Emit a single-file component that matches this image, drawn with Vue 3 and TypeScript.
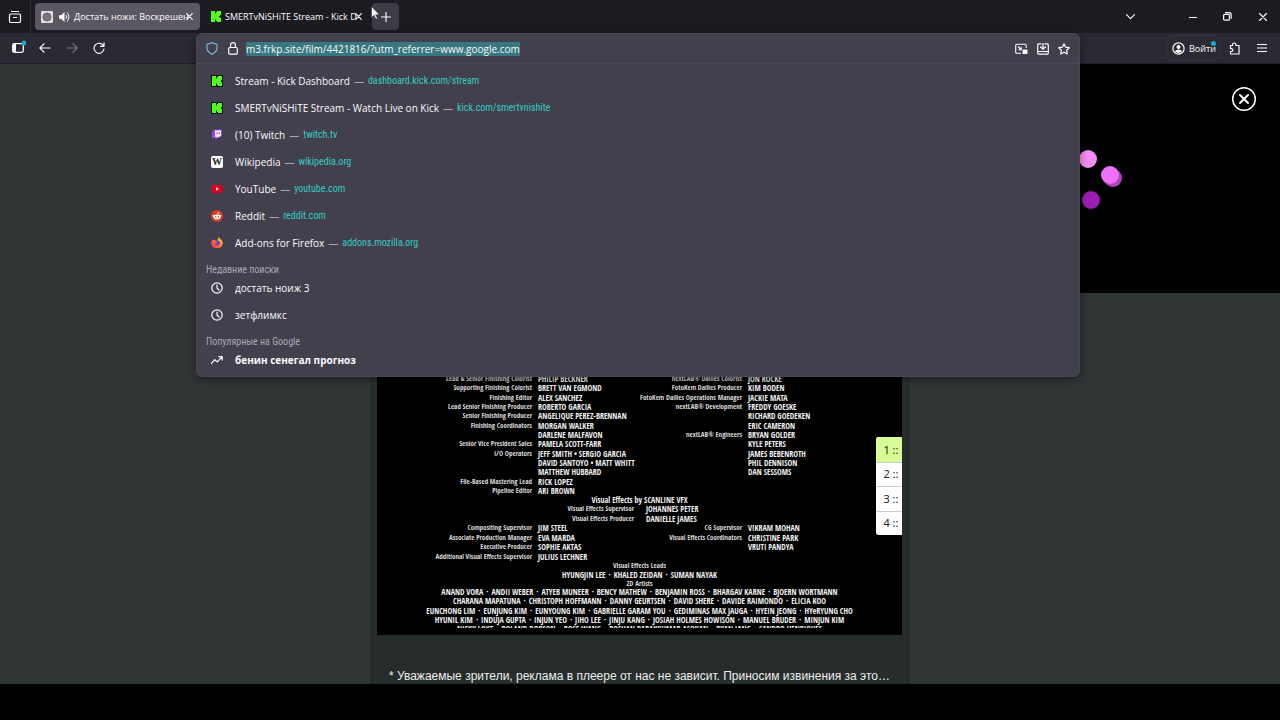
<script setup lang="ts">
import { onMounted, ref } from 'vue'

interface Site { icon: string; title: string; host: string }
interface Credit { role: string; name: string }

const address = ref('m3.frkp.site/film/4421816/?utm_referrer=www.google.com')
const addressField = ref<HTMLInputElement | null>(null)

const sites: Site[] = [
  { icon: 'kick', title: 'Stream - Kick Dashboard', host: 'dashboard.kick.com/stream' },
  { icon: 'kick', title: 'SMERTvNiSHiTE Stream - Watch Live on Kick', host: 'kick.com/smertvnishite' },
  { icon: 'twitch', title: '(10) Twitch', host: 'twitch.tv' },
  { icon: 'wiki', title: 'Wikipedia', host: 'wikipedia.org' },
  { icon: 'youtube', title: 'YouTube', host: 'youtube.com' },
  { icon: 'reddit', title: 'Reddit', host: 'reddit.com' },
  { icon: 'firefox', title: 'Add-ons for Firefox', host: 'addons.mozilla.org' },
]
const recent: string[] = ['достать ноиж 3', 'зетфлимкс']

const c = (role: string, name: string): Credit => ({ role, name })

const finishing: Credit[][] = [
  [
    c('Lead & Senior Finishing Colorist', 'PHILIP BECKNER'),
    c('Supporting Finishing Colorist', 'BRETT VAN EGMOND'),
    c('Finishing Editor', 'ALEX SANCHEZ'),
    c('Lead Senior Finishing Producer', 'ROBERTO GARCIA'),
    c('Senior Finishing Producer', 'ANGELIQUE PEREZ-BRENNAN'),
    c('Finishing Coordinators', 'MORGAN WALKER'),
    c('', 'DARLENE MALFAVON'),
    c('Senior Vice President Sales', 'PAMELA SCOTT-FARR'),
    c('I/O Operators', 'JEFF SMITH • SERGIO GARCIA'),
    c('', 'DAVID SANTOYO • MATT WHITT'),
    c('', 'MATTHEW HUBBARD'),
    c('File-Based Mastering Lead', 'RICK LOPEZ'),
    c('Pipeline Editor', 'ARI BROWN'),
  ],
  [
    c('nextLAB® Dailies Colorist', 'JON ROCKE'),
    c('FotoKem Dailies Producer', 'KIM BODEN'),
    c('FotoKem Dailies Operations Manager', 'JACKIE MATA'),
    c('nextLAB® Development', 'FREDDY GOESKE'),
    c('', 'RICHARD GOEDEKEN'),
    c('', 'ERIC CAMERON'),
    c('nextLAB® Engineers', 'BRYAN GOLDER'),
    c('', 'KYLE PETERS'),
    c('', 'JAMES BEBENROTH'),
    c('', 'PHIL DENNISON'),
    c('', 'DAN SESSOMS'),
    c('', ''),
    c('', ''),
  ],
]
const scanline: Credit[][] = [
  [
    c('Compositing Supervisor', 'JIM STEEL'),
    c('Associate Production Manager', 'EVA MARDA'),
    c('Executive Producer', 'SOPHIE AKTAS'),
    c('Additional Visual Effects Supervisor', 'JULIUS LECHNER'),
  ],
  [
    c('CG Supervisor', 'VIKRAM MOHAN'),
    c('Visual Effects Coordinators', 'CHRISTINE PARK'),
    c('', 'VRUTI PANDYA'),
    c('', ''),
  ],
]
const artists: string[][] = [
  ['ANAND VORA', 'ANDII WEBER', 'ATYEB MUNEER', 'BENCY MATHEW', 'BENJAMIN ROSS', 'BHARGAV KARNE', 'BJOERN WORTMANN'],
  ['CHARANA MAPATUNA', 'CHRISTOPH HOFFMANN', 'DANNY GEURTSEN', 'DAVID SHERE', 'DAVIDE RAIMONDO', 'ELICIA KOO'],
  ['EUNCHONG LIM', 'EUNJUNG KIM', 'EUNYOUNG KIM', 'GABRIELLE GARAM YOU', 'GEDIMINAS MAX JAUGA', 'HYEIN JEONG', 'HYeRYUNG CHO'],
  ['HYUNIL KIM', 'INDUJA GUPTA', 'INJUN YEO', 'JIHO LEE', 'JINJU KANG', 'JOSIAH HOLMES HOWISON', 'MANUEL BRUDER', 'MINJUN KIM'],
]
const lastArtists: string[] = ['NICKY LOKE', 'ROLAND DOBSON', 'ROSE WANG', 'ROSHAN PARAKKUMAR ASOKAN', 'RYAN JANG', 'SANDRO HENRIQUES']
const players: number[] = [1, 2, 3, 4]
const activePlayer = ref(1)

onMounted(() => {
  addressField.value?.focus()
  addressField.value?.select()
})
</script>

<template>
  <div class="browser">
    <header class="tabstrip">
      <button class="recent-view" aria-label="Недавние">
        <svg width="14" height="14" viewBox="0 0 14 14" class="line"><path d="M3.500 1.500h7M3 4h8a1.500 1.500 0 0 1 1.500 1.500V11a1.500 1.500 0 0 1-1.500 1.500H3A1.500 1.500 0 0 1 1.500 11V5.500A1.500 1.500 0 0 1 3 4zM5.500 7.500h3" /></svg>
      </button>
      <div class="tab active">
        <svg width="12" height="12" viewBox="0 0 12 12"><rect width="12" height="12" rx="1" fill="#e3d8da" /><circle cx="6" cy="6" r="4" fill="#77747b" stroke="#67636c" /></svg>
        <svg class="sound" width="11" height="12" viewBox="0 0 11 12"><path d="M0 4.200h2L5.500 1v10L2 7.800H0z" fill="#fbfbfe" /><path d="M7 4q1.600 2 0 4M8 1.500q4 4.500 0 9" fill="none" stroke="#fbfbfe" /></svg>
        <button class="tab-title">Достать ножи: Воскрешен</button>
        <button class="tab-close" aria-label="Закрыть вкладку"><svg width="7" height="7" viewBox="0 0 7 7" class="line"><path d="M.7.7l5.600 5.600M6.300.7L.7 6.300" /></svg></button>
      </div>
      <div class="tab">
        <svg class="kick-tab" width="10" height="11" viewBox="0 0 10 11"><path d="M0 0h4v2.500h1V1h1V0h4v4H9v1H8v1h1v1h1v4H6v-1H5V8.500H4V11H0z" fill="#53fc18" /></svg>
        <button class="tab-title">SMERTvNiSHiTE Stream - Kick D</button>
        <button class="tab-close" aria-label="Закрыть вкладку"><svg width="7" height="7" viewBox="0 0 7 7" class="line"><path d="M.7.7l5.600 5.600M6.300.7L.7 6.300" /></svg></button>
      </div>
      <button class="new-tab" aria-label="Новая вкладка">
        <svg width="10" height="10" viewBox="0 0 10 10" class="line"><path d="M5 .5v9M.5 5h9" /></svg>
        <svg class="pointer" width="9" height="14" viewBox="0 0 9 14"><path d="M.5.5v11l2.600-2.300 1.800 4 1.600-.8-1.800-3.700h3.600z" fill="#fff" stroke="#222" stroke-width=".5" /></svg>
      </button>
      <div class="window-controls">
        <button class="all-tabs" aria-label="Список вкладок"><svg width="9" height="6" viewBox="0 0 9 6" class="line"><path d="M.5.7l4 4 4-4" /></svg></button>
        <button aria-label="Свернуть"><svg width="8" height="8" viewBox="0 0 8 8" class="line"><path d="M.5 4.500h7" /></svg></button>
        <button aria-label="Восстановить"><svg width="9" height="9" viewBox="0 0 9 9" class="line"><rect x=".6" y="2.400" width="5.800" height="5.800" rx="1" /><path d="M2.500.7H6A2.200 2.200 0 0 1 8.200 2.900v3.400" /></svg></button>
        <button aria-label="Закрыть"><svg width="8" height="8" viewBox="0 0 8 8" class="line"><path d="M.5.5l7 7M7.500.5l-7 7" /></svg></button>
      </div>
    </header>

    <nav class="toolbar">
      <div class="nav-buttons">
        <button aria-label="Боковая панель"><svg width="16" height="16" viewBox="0 0 16 16"><rect x="2.700" y="3.700" width="10.600" height="8.600" rx="1.500" fill="none" stroke="#fbfbfe" stroke-width="1.300" /><path d="M3 4h3v8H3z" fill="#fbfbfe" /><circle cx="14" cy="3" r="2.500" fill="#13a9d4" /></svg></button>
        <button aria-label="Назад"><svg width="12" height="12" viewBox="0 0 12 12" class="line"><path d="M11 6H1M5 1.800L.9 6 5 10.200" /></svg></button>
        <button class="dim" aria-label="Вперёд" disabled><svg width="12" height="12" viewBox="0 0 12 12" class="line"><path d="M1 6h10M7 1.800L11.100 6 7 10.200" /></svg></button>
        <button aria-label="Обновить"><svg width="12" height="12" viewBox="0 0 12 12" class="line"><path d="M10.600 4.200A5 5 0 1 0 11 7M7.500 4.300H11V.8" /></svg></button>
      </div>

      <div class="address-slot">
        <div class="address-panel">
          <div class="address-row">
            <button class="shield" aria-label="Защита"><svg width="12" height="13" viewBox="0 0 12 13"><path d="M6 .7l5 1.700v3.200c0 3-2 5.300-5 6.700C3 10.900 1 8.600 1 5.600V2.400z" fill="none" stroke="#80bce0" stroke-width="1.100" /></svg></button>
            <button class="lock" aria-label="Соединение"><svg width="10" height="13" viewBox="0 0 10 13" class="line"><rect x=".7" y="5.500" width="8.600" height="6.700" rx="1" /><path d="M2.600 5.500V3a2.400 2.400 0 0 1 4.800 0v2.500" /></svg></button>
            <input ref="addressField" v-model="address" type="text" aria-label="Адрес" spellcheck="false" />
            <div class="address-actions">
              <button aria-label="Картинка в картинке"><svg width="13" height="12" viewBox="0 0 13 12"><path d="M6 10.300H2A1.200 1.200 0 0 1 .7 9V2.500A1.200 1.200 0 0 1 2 1.300h8a1.200 1.200 0 0 1 1.200 1.200V5M3 3.500l3 3M6.200 4v2.700H3.500" fill="none" stroke="#fbfbfe" stroke-width="1.100" /><rect x="7.500" y="6.500" width="5" height="4.500" rx=".8" fill="#fbfbfe" /></svg></button>
              <button aria-label="Установить"><svg width="12" height="12" viewBox="0 0 12 12" class="line"><path d="M4 .9H1.700a1 1 0 0 0-1 1v8.200a1 1 0 0 0 1 1h8.600a1 1 0 0 0 1-1V1.900a1 1 0 0 0-1-1H8M6 0v6M3.600 4L6 6.300 8.400 4M.7 8.500h10.600" /></svg></button>
              <button aria-label="В закладки"><svg width="12" height="12" viewBox="0 0 12 12" class="line"><path d="M6 .8l1.600 3.400 3.700.5-2.700 2.600.7 3.700L6 9.200 2.700 11l.7-3.700L.7 4.700l3.700-.5z" /></svg></button>
            </div>
          </div>

          <div class="suggestions">
            <ul>
              <li v-for="site in sites" :key="site.host">
                <a href="#">
                  <span class="favicon">
                    <svg v-if="site.icon === 'kick'" width="12" height="12" viewBox="0 0 12 12"><rect width="12" height="12" fill="#08120a" /><path d="M1 1h4v2.500h1V2h1V1h4v4h-1v2h1v4H7v-1H6V8.500H5V11H1z" fill="#53fc18" /></svg>
                    <svg v-else-if="site.icon === 'twitch'" width="12" height="12" viewBox="0 0 12 12"><path d="M3 .5h8v6L8.500 9H6.500L4.500 11V9H1V3z" fill="#9147e8" /><path d="M4 1.500h6v4.800L8.500 7.700H6.700L5.500 8.900V7.700H4z" fill="#fff" /><path d="M6 3v2.500M8.200 3v2.500" stroke="#9147e8" /></svg>
                    <span v-else-if="site.icon === 'wiki'" class="wiki">W</span>
                    <svg v-else-if="site.icon === 'youtube'" width="12" height="12" viewBox="0 0 12 12"><rect x=".5" y="2" width="11" height="8" rx="2" fill="#e1001b" /><path d="M5 4.300v3.400L7.900 6z" fill="#fff" /></svg>
                    <svg v-else-if="site.icon === 'reddit'" width="12" height="12" viewBox="0 0 12 12"><circle cx="6" cy="6" r="6" fill="#e23c22" /><ellipse cx="6" cy="7" rx="3.500" ry="2.500" fill="#fff" /><circle cx="2.600" cy="5.800" r=".9" fill="#fff" /><circle cx="9.400" cy="5.800" r=".9" fill="#fff" /><circle cx="7.700" cy="3" r=".8" fill="#fff" /><path d="M6 4.800l.5-2 1 .2" fill="none" stroke="#fff" stroke-width=".5" /><circle cx="4.700" cy="6.700" r=".7" fill="#e23c22" /><circle cx="7.300" cy="6.700" r=".7" fill="#e23c22" /></svg>
                    <svg v-else width="12" height="12" viewBox="0 0 12 12"><defs><linearGradient id="fox" x1="1" y1="0" x2="0" y2="1"><stop offset="0" stop-color="#ffe14a" /><stop offset=".45" stop-color="#ff8a1f" /><stop offset="1" stop-color="#f0195e" /></linearGradient></defs><path d="M.3 5.500Q.6 3.300 1.800 2.300l.3 1.200L4 2.400l.2 1.300 2.200 0L7.300.3q1.600.8 2.300 2.500l.5-.6q1.900 2.300 1.500 4.800A5.700 5.200 0 0 1 .3 6.500z" fill="url(#fox)" /><path d="M4 4q3.500-1.600 5 1.200Q9.400 8.200 6.500 8.600 4 8.700 3.300 6.300 5 6.700 6 5.600z" fill="#7f3bd6" /></svg>
                  </span>
                  <span class="title">{{ site.title }}</span><span class="dash">—</span><span class="host">{{ site.host }}</span>
                </a>
              </li>
            </ul>
            <h2>Недавние поиски</h2>
            <ul>
              <li v-for="term in recent" :key="term">
                <a href="#">
                  <span class="favicon"><svg width="12" height="12" viewBox="0 0 12 12" class="line"><circle cx="6" cy="6" r="5.200" /><path d="M6 3v3l2 2" /></svg></span>
                  <span class="title">{{ term }}</span>
                </a>
              </li>
            </ul>
            <h2>Популярные на Google</h2>
            <ul>
              <li>
                <a href="#">
                  <span class="favicon"><svg width="12" height="12" viewBox="0 0 12 12" class="line"><path d="M.3 9.500l3.500-3.800 2.500 2.200 4.700-5M7.800 2.700h3.400v3.400" /></svg></span>
                  <span class="title strong">бенин сенегал прогноз</span>
                </a>
              </li>
            </ul>
          </div>
        </div>
      </div>

      <div class="tool-buttons">
        <button class="sign-in">
          <svg width="13" height="13" viewBox="0 0 13 13"><circle cx="6.500" cy="6.500" r="5.600" fill="none" stroke="#fbfbfe" stroke-width="1.200" /><circle cx="6.500" cy="5" r="2" fill="#fbfbfe" /><path d="M2.800 9q3.700-3 7.400 0-3.700 4-7.400 0z" fill="#fbfbfe" /></svg>
          <span>Войти</span>
        </button>
        <button aria-label="Расширения"><svg width="12" height="13" viewBox="0 0 12 13" class="line"><path d="M3.500 3.500V2.700a1.700 1.700 0 0 1 3.400 0v.8H10v8.500H1.500V9.500h1a1.400 1.400 0 0 0 0-2.800h-1V3.500z" /></svg></button>
        <button aria-label="Меню"><svg width="10" height="10" viewBox="0 0 10 10" class="line"><path d="M.5 1.500h9M.5 5h9M.5 8.500h9" /></svg></button>
      </div>
    </nav>

    <main class="page">
      <aside class="banner">
        <svg class="dots" width="72" height="60" viewBox="0 0 72 60">
          <circle cx="36" cy="9" r="9" fill="#f58cf5" /><circle cx="61" cy="28" r="9" fill="#ae43bd" /><circle cx="58" cy="25" r="9" fill="#ee70fb" /><circle cx="39" cy="50" r="9" fill="#9a1fb2" />
        </svg>
        <button aria-label="Закрыть рекламу"><svg width="26" height="26" viewBox="0 0 26 26"><circle cx="13" cy="13" r="11.300" fill="none" stroke="#fff" stroke-width="1.500" /><path d="M9 9l8 8M17 9l-8 8" stroke="#fff" stroke-width="2" stroke-linecap="round" /></svg></button>
      </aside>
      <section class="film">
        <div class="player">
          <div class="columns finishing">
            <div v-for="(group, g) in finishing" :key="g" class="column">
              <template v-for="(item, i) in group" :key="i"><span class="role">{{ item.role }}</span><span>{{ item.name }}</span></template>
            </div>
          </div>
          <div class="vfx">
            <h3>Visual Effects by SCANLINE VFX</h3>
            <span class="role">Visual Effects Supervisor</span><span>JOHANNES PETER</span>
            <span class="role">Visual Effects Producer</span><span>DANIELLE JAMES</span>
          </div>
          <div class="columns scanline">
            <div v-for="(group, g) in scanline" :key="g" class="column">
              <template v-for="(item, i) in group" :key="i"><span class="role">{{ item.role }}</span><span>{{ item.name }}</span></template>
            </div>
          </div>
          <div class="leads">
            <p class="role">Visual Effects Leads</p>
            <p class="names"><span v-for="n in ['HYUNGJIN LEE', 'KHALED ZEIDAN', 'SUMAN NAYAK']" :key="n">{{ n }}</span></p>
            <p class="role">2D Artists</p>
          </div>
          <div class="artists">
            <p v-for="(line, i) in artists" :key="i" class="names"><span v-for="n in line" :key="n">{{ n }}</span></p>
          </div>
          <p class="names cut"><span v-for="n in lastArtists" :key="n">{{ n }}</span></p>
          <div class="switcher">
            <button v-for="p in players" :key="p" :class="{ on: p === activePlayer }" @click="activePlayer = p">{{ p }} ::</button>
          </div>
        </div>
        <p class="notice">* Уважаемые зрители, реклама в плеере от нас не зависит. Приносим извинения за это…</p>
      </section>
    </main>
    <footer class="letterbox"></footer>
  </div>
</template>

<style>
body { background: #000; }
</style>

<style scoped>
* { box-sizing: border-box; }
.browser { min-height: 100vh; display: flex; flex-direction: column; background: #000; color: #fbfbfe; font-family: "Open Sans", "Noto Sans", sans-serif; font-size: 10px; }
button { border: 0; padding: 0; margin: 0; background: none; color: inherit; font: inherit; display: flex; align-items: center; justify-content: center; flex: none; }
svg { display: block; flex: none; }
.line { fill: none; stroke: currentColor; stroke-width: 1.200; stroke-linecap: round; stroke-linejoin: round; }
ul, p, h2, h3 { margin: 0; padding: 0; list-style: none; font-weight: inherit; font-size: inherit; }

.tabstrip { height: 33px; display: flex; align-items: center; background: #1c1b21; }
.recent-view { width: 31px; height: 33px; border-right: 1px solid #302f37; }
.tab { width: 165px; height: 27px; margin-left: 4px; padding: 0 5px 0 6px; display: flex; align-items: center; border-radius: 4px; font-size: 9px; }
.tab.active { background: #5b5864; }
.sound { margin-left: 6px; }
.tab-title { flex: 1; min-width: 0; margin-left: 4px; justify-content: flex-start; white-space: nowrap; }
.kick-tab { margin-left: 1px; }
.tab-close { width: 11px; height: 20px; }
.new-tab { position: relative; width: 27px; height: 27px; margin-left: 3px; border-radius: 4px; background: #3d3b44; }
.pointer { position: absolute; left: -1px; top: 3px; }
.window-controls { margin-left: auto; display: flex; }
.window-controls button { width: 35px; height: 32px; }
.window-controls .all-tabs { margin-right: 27px; }

.toolbar { height: 31px; display: flex; align-items: center; background: #2b2a32; border-bottom: 1px solid #1d1c22; }
.nav-buttons { width: 196px; padding-left: 4px; display: flex; }
.nav-buttons button { width: 27px; height: 27px; }
.dim { color: #797882; }
.address-slot { position: relative; flex: 1; min-width: 0; align-self: stretch; }
.address-panel { position: absolute; z-index: 2; top: 0; left: 0; right: 0; background: #42404c; border: 1px solid #494752; border-radius: 6px; box-shadow: 0 2px 8px #00000066; }
.address-row { height: 30px; padding: 0 5px 0 4px; display: flex; align-items: center; border-bottom: 1px solid #4b4955; }
.shield, .lock { width: 21px; height: 26px; }
.address-row input { flex: 1; min-width: 0; margin-left: 3px; padding: 0; border: 0; outline: 0; background: none; color: #fbfbfe; font: inherit; }
.address-row input::selection { background: #38777f; color: #fbfbfe; }
.address-actions { display: flex; }
.address-actions button { width: 21px; height: 26px; }
.suggestions { padding: 3px 9px 3px; }
.suggestions a { height: 27px; display: flex; align-items: center; color: inherit; text-decoration: none; white-space: nowrap; }
.favicon { width: 12px; height: 12px; margin: 0 12px 0 5px; flex: none; }
.wiki { display: block; width: 12px; height: 12px; border-radius: 2px; background: #fff; color: #222; font: 700 10px/12px "Liberation Serif", serif; text-align: center; }
.dash { margin: 0 4px; color: #a9a7b3; }
.host { color: #37cbc8; font-family: "Roboto Condensed", "Roboto", sans-serif; font-size: 10px; }
.strong { font-weight: 700; }
.suggestions h2 { height: 18px; padding-top: 8px; line-height: 12px; color: #aaa8b3; font-family: "Roboto Condensed", "Roboto", sans-serif; font-size: 10px; }
.tool-buttons { width: 200px; padding-right: 5px; display: flex; justify-content: flex-end; align-items: center; }
.tool-buttons button { width: 27px; height: 27px; }
.tool-buttons .sign-in { position: relative; width: 54px; height: 26px; gap: 4px; border: 1px solid #32313b; border-radius: 4px; font-size: 9px; }
.sign-in::after { content: ""; position: absolute; right: 4px; top: 5px; width: 5px; height: 5px; border-radius: 50%; background: #18a8ce; }

.page { flex: 1; min-height: 620px; background: #303536; overflow: hidden; }
.banner { position: relative; width: 50%; height: 229px; margin-left: auto; background: #000; }
.dots { position: absolute; right: 156px; top: 86px; }
.banner button { position: absolute; right: 23px; top: 22px; }
.film { width: 540px; margin: 0 auto; padding: 0 8px 0 7px; background: #262d2c; }
.player { position: relative; height: 342px; padding-top: 81px; background: #000; color: #f0f0f0; font: 700 8px/9px "Open Sans Condensed", "Roboto Condensed", sans-serif; white-space: nowrap; }
.role { font-size: 7px; text-align: right; color: #dadada; }
.columns { display: grid; grid-template-columns: 210px 1fr; padding-left: 50px; }
.column { display: grid; grid-template-columns: 105px 1fr; grid-auto-rows: 1fr; column-gap: 6px; align-items: center; }
.column .role { display: flex; justify-content: flex-end; }
.finishing { height: 121px; }
.scanline { height: 38px; }
.vfx { height: 28px; display: grid; grid-template-columns: 257px 1fr; grid-auto-rows: 1fr; column-gap: 12px; align-items: center; }
.vfx h3 { grid-column: 1 / -1; text-align: center; }
.leads { height: 26px; display: grid; align-items: center; }
.leads .role { text-align: center; }
.artists { height: 37px; display: grid; align-items: center; }
.names { display: flex; justify-content: center; }
.names span + span::before { content: "·"; margin: 0 3px; }
.names.cut { height: 4px; overflow: hidden; }
.switcher { position: absolute; right: 0; top: 144px; width: 26px; height: 98px; display: grid; grid-auto-rows: 1fr; border-radius: 3px 0 0 3px; overflow: hidden; background: #fff; }
.switcher button { color: #222; font: 11px/14px "Noto Sans", sans-serif; white-space: pre; padding-left: 4px; border-top: 1px solid #ccc; }
.switcher .on { background: #d9fb95; border-top-color: #d9fb95; }
.notice { height: 49px; padding: 34px 12px 0 12px; font: 12px/15px "Liberation Sans", Arial, sans-serif; color: #eee; white-space: nowrap; }
.letterbox { height: 36px; background: #000; }
</style>
